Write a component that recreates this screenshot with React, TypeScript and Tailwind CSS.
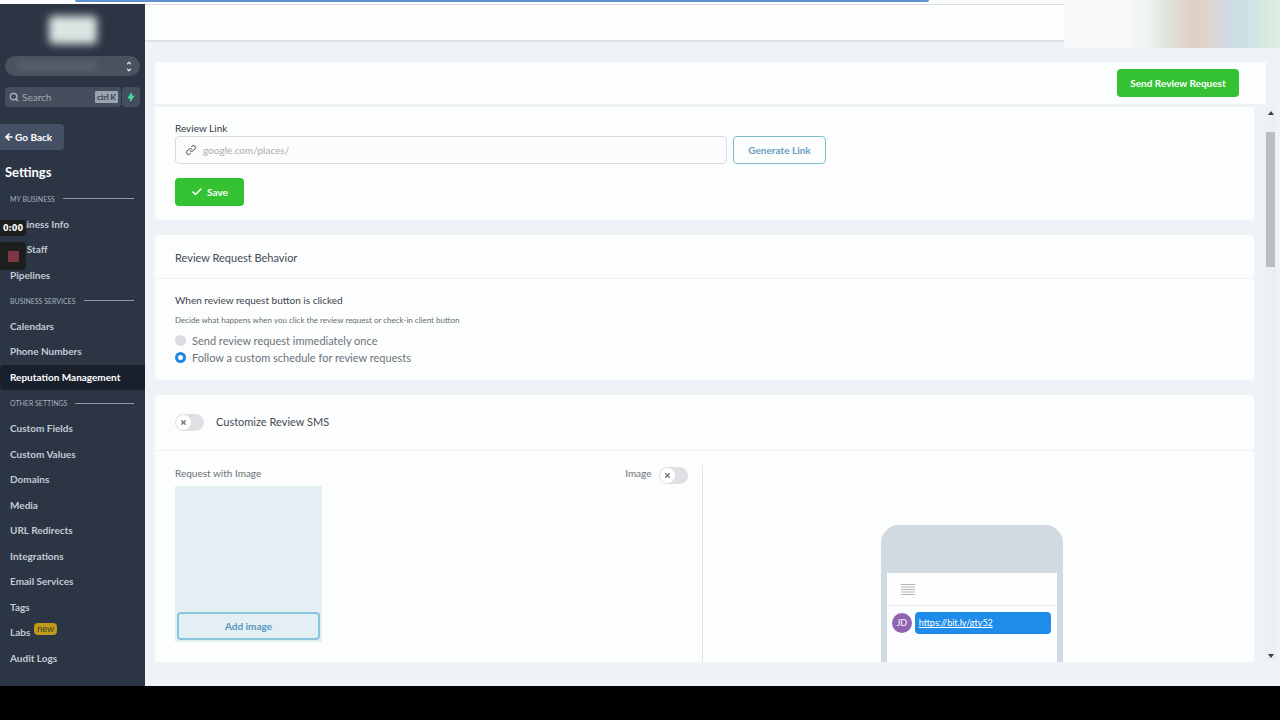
import { ArrowLeft, Check, ChevronDown, ChevronUp, Search, X } from 'lucide-react'
import { HiLightningBolt, HiOutlineLink } from 'react-icons/hi'

const navGroups = [
  {
    title: 'MY BUSINESS',
    items: ['Business Info', 'My Staff', 'Pipelines'],
  },
  {
    title: 'BUSINESS SERVICES',
    items: ['Calendars', 'Phone Numbers', 'Reputation Management'],
  },
  {
    title: 'OTHER SETTINGS',
    items: [
      'Custom Fields',
      'Custom Values',
      'Domains',
      'Media',
      'URL Redirects',
      'Integrations',
      'Email Services',
      'Tags',
      'Labs',
      'Audit Logs',
    ],
  },
]

const Toggle = ({ id, label }: { id: string; label: string }) => (
  <span className="relative flex h-[17px] w-[29px] shrink-0">
    <input
      id={id}
      type="checkbox"
      aria-label={label}
      className="peer h-full w-full cursor-pointer appearance-none rounded-full bg-[#dfdfe4] checked:bg-[#1f87e5]"
    />
    <span className="pointer-events-none absolute left-px top-px flex h-[15px] w-[15px] items-center justify-center rounded-full bg-white peer-checked:left-[13px]">
      <X className="h-[7px] w-[7px] text-[#777]" strokeWidth={5} />
    </span>
  </span>
)

const NavGroup = ({ title, items }: { title: string; items: string[] }) => (
  <>
    <h2 className="flex min-h-0 flex-1 items-center gap-2 pl-[10px] pr-[11px] text-[7px] text-[#a9b1be]">
      <span className="whitespace-nowrap">{title}</span>
      <span className="h-px flex-1 bg-[#8e99a7]" />
    </h2>
    {items.map((item) => {
      const active = item === 'Reputation Management'
      return (
        <a
          key={item}
          href="#"
          className={
            active
              ? 'flex min-h-0 flex-1 items-center whitespace-nowrap rounded-l bg-[#1a1f2c] pl-[10px] text-[10px] font-bold text-white'
              : 'flex min-h-0 flex-1 items-center whitespace-nowrap pl-[10px] text-[10px] font-bold text-[#c3cad4]'
          }
        >
          {item}
          {item === 'Labs' && (
            <span className="mb-2 ml-1 rounded-sm bg-[#c09a1a] px-[3px] text-[9px] font-normal leading-3 text-[#3b3a2c]">
              new
            </span>
          )}
        </a>
      )
    })}
  </>
)

const Sidebar = () => (
  <aside className="relative flex w-[145px] shrink-0 flex-col bg-[#2b3544] pb-[15px]">
    <div className="flex h-[52px] items-center justify-center">
      <div className="h-7 w-12 rounded bg-[#dde5e3] blur-[4px]" />
    </div>
    <button
      type="button"
      aria-label="Switch account"
      className="mx-[5px] flex h-5 items-center justify-between rounded-full bg-[#4a5260] pl-3 pr-[7px]"
    >
      <span className="h-2 w-20 rounded bg-[#5b6270] blur-[3px]" />
      <span className="flex flex-col gap-px text-[#dce0e6]">
        <ChevronUp className="h-[6px] w-2" strokeWidth={5} />
        <ChevronDown className="h-[6px] w-2" strokeWidth={5} />
      </span>
    </button>
    <div className="mx-[5px] mt-[11px] flex h-5 gap-px">
      <label className="flex min-w-0 flex-1 items-center rounded bg-[#454e5c] pl-1 pr-[3px]">
        <Search className="h-[10px] w-[10px] shrink-0 text-[#aeb4bf]" strokeWidth={3} />
        <input
          type="text"
          aria-label="Search"
          placeholder="Search"
          className="ml-[3px] min-w-0 flex-1 bg-transparent text-[10px] outline-none placeholder:text-[#a2a9b4]"
        />
        <kbd className="rounded-[1px] bg-[#9aa4b0] px-[2px] font-['Lato',sans-serif] text-[8px] font-semibold leading-3 text-[#25303d]">
          ctrl K
        </kbd>
      </label>
      <button
        type="button"
        aria-label="Quick actions"
        className="flex w-[18px] items-center justify-center rounded bg-[#454e5c] text-[#42d99a]"
      >
        <HiLightningBolt className="h-[10px] w-[10px]" />
      </button>
    </div>
    <a
      href="#"
      className="mt-[17px] flex h-[26px] w-16 items-center gap-px rounded-r bg-[#465064] pl-1 text-[10px] font-bold text-white"
    >
      <ArrowLeft className="h-[10px] w-[10px]" strokeWidth={4} />
      Go Back
    </a>
    <h1 className="mb-1 mt-3 pl-[5px] text-[13px] font-bold leading-5 text-white">Settings</h1>
    <nav className="flex min-h-0 flex-1 flex-col">
      {navGroups.map((group) => (
        <NavGroup key={group.title} title={group.title} items={group.items} />
      ))}
    </nav>

    {/* screen recorder controls floating over the menu */}
    <div className="absolute left-0 top-[216px] flex flex-col gap-[6px]">
      <span className="flex h-4 w-[26px] items-center justify-center rounded-r-sm bg-[#1d1f1f] pt-px font-['DejaVu_Sans',sans-serif] text-[8px] font-bold text-white">
        0:00
      </span>
      <button
        type="button"
        aria-label="Stop recording"
        className="flex h-7 w-[26px] items-center justify-center rounded-r-sm bg-[#1d1f1f]"
      >
        <span className="h-[11px] w-[11px] bg-[#803546]" />
      </button>
    </div>
  </aside>
)

const ReviewLinkCard = () => (
  <section className="rounded-b bg-[#fcfdfd] px-5 pb-[14px] pt-[14px]">
    <label htmlFor="review-link" className="block text-[10px] leading-[14px] text-[#333a44]">
      Review Link
    </label>
    <div className="mt-px flex items-center gap-[6px]">
      <div className="flex h-7 w-[552px] items-center rounded border border-[#d8dadd] bg-[#fcfcfd] pl-[9px]">
        <HiOutlineLink className="h-3 w-3 text-[#444]" />
        <input
          id="review-link"
          type="text"
          placeholder="google.com/places/"
          className="ml-[6px] min-w-0 flex-1 bg-transparent text-[10px] outline-none placeholder:text-[#a9adb3]"
        />
      </div>
      <button
        type="button"
        className="h-7 w-[93px] rounded border border-[#7fbccb] text-[10px] font-bold text-[#6a9cc3]"
      >
        Generate Link
      </button>
    </div>
    <button
      type="button"
      className="mt-[14px] flex h-7 w-[69px] items-center justify-center gap-1 rounded bg-[#34c232] text-[10px] font-bold text-white"
    >
      <Check className="h-3 w-3" strokeWidth={3} />
      Save
    </button>
  </section>
)

const BehaviorCard = () => (
  <section className="rounded bg-[#fcfdfd]">
    <h2 className="flex h-11 items-center border-b border-[#eff1f4] px-5 pt-1 text-[11px] text-[#444b55]">
      Review Request Behavior
    </h2>
    <div className="px-5 pb-[14px] pt-[14px]">
      <h3 className="text-[10px] leading-[14px] text-[#3c434d]">When review request button is clicked</h3>
      <p className="mb-[6px] mt-[7px] text-[8px] leading-3 text-[#666d75]">
        Decide what happens when you click the review request or check-in client button
      </p>
      <label className="flex items-center gap-[6px] text-[11px] leading-[17px] text-[#6d7379]">
        <input
          type="radio"
          name="behavior"
          className="h-[11px] w-[11px] appearance-none rounded-full bg-[#dcdce2] checked:border-[3px] checked:border-[#1f87e5] checked:bg-white"
        />
        Send review request immediately once
      </label>
      <label className="flex items-center gap-[6px] text-[11px] leading-[17px] text-[#6d7379]">
        <input
          type="radio"
          name="behavior"
          defaultChecked
          className="h-[11px] w-[11px] appearance-none rounded-full bg-[#dcdce2] checked:border-[3px] checked:border-[#1f87e5] checked:bg-white"
        />
        Follow a custom schedule for review requests
      </label>
    </div>
  </section>
)

const PhonePreview = () => (
  <div className="mt-[60px] h-[340px] w-[182px] rounded-[18px] bg-[#d0dae0] px-[6px] pb-12 pt-12">
    <div className="h-full bg-[#fcfdfe]">
      <div className="flex h-[33px] items-center border-b border-[#e6e8ec] pl-[14px]">
        <svg viewBox="0 0 14 11" className="h-[11px] w-[14px]" stroke="#b3b5b9" strokeWidth="1">
          <path d="M0 .5h14M0 3h14M0 5.5h14M0 8h14M0 10.5h14" />
        </svg>
      </div>
      <div className="flex items-center gap-[3px] pl-[5px] pr-[6px] pt-[6px]">
        <span className="flex h-5 w-5 items-center justify-center rounded-full bg-[#9065b0] text-[9px] text-white">
          JD
        </span>
        <a
          href="#"
          className="flex h-[22px] flex-1 items-center rounded bg-[#1f8ceb] pl-1 text-[9px] text-white underline"
        >
          https://bit.ly/gty52
        </a>
      </div>
    </div>
  </div>
)

const CustomizeSmsCard = () => (
  <section className="rounded-t bg-[#fcfdfd]">
    <div className="flex h-14 items-center gap-[12px] border-b border-[#eff1f4] px-5">
      <Toggle id="customize-sms" label="Customize Review SMS" />
      <label htmlFor="customize-sms" className="text-[11px] text-[#444b55]">
        Customize Review SMS
      </label>
    </div>
    <div className="flex pr-[6px] pt-[14px]">
      <div className="flex w-1/2 justify-between pl-5 pr-[14px]">
        <div>
          <p className="text-[10px] leading-4 text-[#6b7075]">Request with Image</p>
          <div className="mt-[5px] flex h-[156px] w-[147px] flex-col justify-end bg-[#e4eff4] p-[2px]">
            <button
              type="button"
              className="h-7 rounded border-2 border-[#8ac3dc] text-[10px] font-bold text-[#5597bf]"
            >
              Add image
            </button>
          </div>
        </div>
        <div className="flex items-start gap-[7px]">
          <label htmlFor="sms-image" className="text-[10px] leading-4 text-[#6b7075]">
            Image
          </label>
          <span className="pt-[2px]">
            <Toggle id="sms-image" label="Image" />
          </span>
        </div>
      </div>
      <div className="flex flex-1 justify-center border-l border-[#e2e4e8] pr-[7px]">
        <PhonePreview />
      </div>
    </div>
  </section>
)

const Scrollbar = () => (
  <div className="mr-1 flex w-[11px] shrink-0 flex-col items-center bg-[#eeeff1] py-1">
    <svg viewBox="0 0 6 4" className="h-1 w-[6px]" fill="#3c3c3c">
      <path d="M3 0 6 4H0z" />
    </svg>
    <div className="mb-auto mt-[17px] h-[135px] w-[9px] bg-[#bcbdc1]" />
    <svg viewBox="0 0 6 4" className="h-1 w-[6px]" fill="#3c3c3c">
      <path d="M0 0H6L3 4z" />
    </svg>
  </div>
)

export default function App() {
  return (
    <div className="relative flex h-screen flex-col overflow-hidden bg-black pb-[34px] font-['Lato','Open_Sans',sans-serif]">
      {/* bottom edge of the browser's address bar */}
      <div className="flex h-1 shrink-0 bg-[#fbfcfd] pl-[75px]">
        <div className="h-[2px] w-[854px] rounded-b-full bg-[#5f92cf]" />
      </div>

      <div className="flex min-h-0 flex-1">
        <Sidebar />
        <main className="flex min-w-0 flex-1 flex-col bg-[#eef3f7]">
          <header className="h-[38px] shrink-0 border-b-2 border-t border-b-[#dfe3e6] border-t-[#dcdde0] bg-[#fcfdfd]" />
          <div className="ml-[10px] mr-[14px] mt-5 flex h-[42px] shrink-0 items-center justify-end bg-[#fcfdfe] pr-[27px]">
            <button
              type="button"
              className="h-7 w-[122px] rounded bg-[#34c232] text-[10px] font-bold text-white"
            >
              Send Review Request
            </button>
          </div>
          <div className="mb-6 ml-[10px] mt-[3px] flex min-h-0 flex-1 gap-[11px]">
            <div className="flex min-w-0 flex-1 flex-col gap-[15px] overflow-hidden">
              <ReviewLinkCard />
              <BehaviorCard />
              <CustomizeSmsCard />
            </div>
            <Scrollbar />
          </div>
        </main>
      </div>

      {/* frosted toolbar corner */}
      <div className="absolute right-0 top-0 h-12 w-[216px] bg-[linear-gradient(to_right,#f9faf9_28%,#eef2ee_40%,#dfe3d8_48%,#decfc5_61%,#ddd5cf_68%,#cfd9e3_76%,#cce0e6_83%,#d3e8e0_91%,#dfece2)]" />
    </div>
  )
}
